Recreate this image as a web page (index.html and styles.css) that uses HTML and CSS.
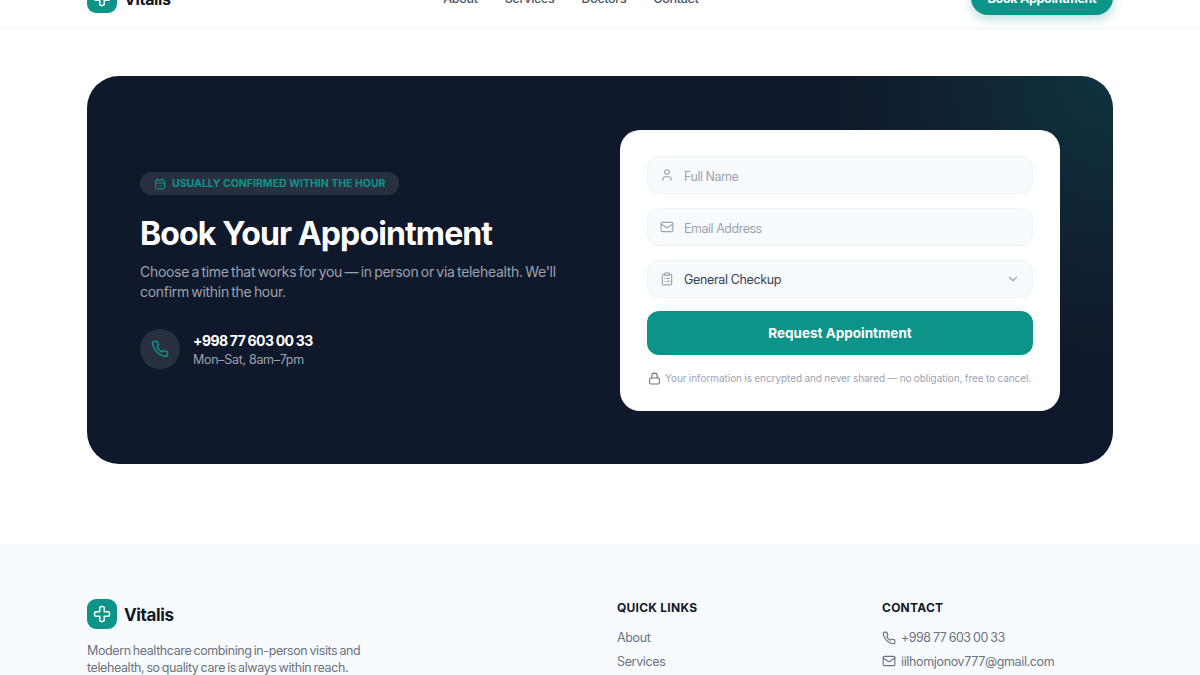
FILE: index.html
```html
<!DOCTYPE html>
<html lang="en">
<head>
<meta charset="utf-8">
<title>Vitalis</title>
<link rel="stylesheet" href="styles.css">
</head>
<body>
<svg class="defs" width="0" height="0">
  <symbol id="cross" viewBox="0 0 24 24"><path d="M11 2a2 2 0 0 0-2 2v5H4a2 2 0 0 0-2 2v2c0 1.1.9 2 2 2h5v5c0 1.1.9 2 2 2h2a2 2 0 0 0 2-2v-5h5a2 2 0 0 0 2-2v-2a2 2 0 0 0-2-2h-5V4a2 2 0 0 0-2-2h-2z"/></symbol>
  <symbol id="phone" viewBox="0 0 24 24"><path d="M22 16.92v3a2 2 0 0 1-2.18 2 19.79 19.79 0 0 1-8.63-3.07 19.5 19.5 0 0 1-6-6 19.79 19.79 0 0 1-3.07-8.67A2 2 0 0 1 4.11 2h3a2 2 0 0 1 2 1.72 12.84 12.84 0 0 0 .7 2.81 2 2 0 0 1-.45 2.11L8.09 9.91a16 16 0 0 0 6 6l1.27-1.27a2 2 0 0 1 2.11-.45 12.84 12.84 0 0 0 2.81.7A2 2 0 0 1 22 16.92z"/></symbol>
  <symbol id="mail" viewBox="0 0 24 24"><rect x="2" y="4" width="20" height="16" rx="2"/><path d="m22 7-8.97 5.7a1.94 1.94 0 0 1-2.06 0L2 7"/></symbol>
  <symbol id="user" viewBox="0 0 24 24"><path d="M19 21v-2a4 4 0 0 0-4-4H9a4 4 0 0 0-4 4v2"/><circle cx="12" cy="7" r="4"/></symbol>
  <symbol id="clip" viewBox="0 0 24 24"><rect x="8" y="2" width="8" height="4" rx="1"/><path d="M16 4h2a2 2 0 0 1 2 2v14a2 2 0 0 1-2 2H6a2 2 0 0 1-2-2V6a2 2 0 0 1 2-2h2"/><path d="M12 11h4M12 16h4M8 11h.01M8 16h.01"/></symbol>
  <symbol id="chev" viewBox="0 0 24 24"><path d="m6 9 6 6 6-6"/></symbol>
  <symbol id="lock" viewBox="0 0 24 24"><rect x="3" y="11" width="18" height="11" rx="2"/><path d="M7 11V7a5 5 0 0 1 10 0v4"/></symbol>
  <symbol id="cal" viewBox="0 0 24 24"><path d="M8 2v4M16 2v4"/><rect x="3" y="4" width="18" height="18" rx="2"/><path d="M3 10h18"/><path d="m9 16 2 2 4-4"/></symbol>
</svg>

<header class="nav">
  <div class="nav-inner">
    <a class="brand brand-top"><span class="brand-mark"><svg class="ic ic-18 white"><use href="#cross"/></svg></span><span class="brand-name">Vitalis</span></a>
    <nav class="nav-links"><a>About</a><a>Services</a><a>Doctors</a><a>Contact</a></nav>
    <a class="nav-cta">Book Appointment</a>
  </div>
</header>

<main class="section">
  <div class="hero">
    <div class="hero-copy">
      <div class="badge"><svg class="ic ic-12"><use href="#cal"/></svg>USUALLY CONFIRMED WITHIN THE HOUR</div>
      <h1>Book Your Appointment</h1>
      <p class="lead">Choose a time that works for you — in person or via telehealth. We'll confirm within the hour.</p>
      <div class="call">
        <span class="call-icon"><svg class="ic ic-18"><use href="#phone"/></svg></span>
        <div class="call-text"><strong>+998 77 603 00 33</strong><span>Mon–Sat, 8am–7pm</span></div>
      </div>
    </div>
    <form class="form">
      <label class="field"><svg class="ic ic-14"><use href="#user"/></svg><input type="text" placeholder="Full Name"></label>
      <label class="field"><svg class="ic ic-14"><use href="#mail"/></svg><input type="email" placeholder="Email Address"></label>
      <label class="field"><svg class="ic ic-14"><use href="#clip"/></svg><select><option>General Checkup</option></select><svg class="ic ic-14"><use href="#chev"/></svg></label>
      <button class="submit" type="button">Request Appointment</button>
      <p class="note"><svg class="ic ic-13"><use href="#lock"/></svg>Your information is encrypted and never shared — no obligation, free to cancel.</p>
    </form>
  </div>
</main>

<footer class="footer">
  <div class="footer-grid">
    <div class="footer-about">
      <a class="brand"><span class="brand-mark"><svg class="ic ic-18 white"><use href="#cross"/></svg></span><span class="brand-name">Vitalis</span></a>
      <p>Modern healthcare combining in-person visits and telehealth, so quality care is always within reach.</p>
    </div>
    <div class="footer-col">
      <h4>QUICK LINKS</h4>
      <a>About</a><a>Services</a><a>Doctors</a>
    </div>
    <div class="footer-col">
      <h4>CONTACT</h4>
      <a class="with-ic tel"><svg class="ic ic-14"><use href="#phone"/></svg>+998 77 603 00 33</a>
      <a class="with-ic"><svg class="ic ic-14"><use href="#mail"/></svg>iilhomjonov777@gmail.com</a>
    </div>
  </div>
</footer>
</body>
</html>
```
FILE: styles.css
```css
* { box-sizing: border-box; }
html { overflow: hidden; }
body { margin: 0; background: #fff; font-family: "Inter", "Liberation Sans", sans-serif; color: #111827; }
.defs { position: absolute; }
.ic { fill: none; stroke: currentColor; stroke-width: 2; stroke-linecap: round; stroke-linejoin: round; flex: none; }
.ic-12 { width: 12px; height: 12px; }
.ic-13 { width: 13px; height: 13px; }
.ic-14 { width: 14px; height: 14px; }
.ic-18 { width: 18px; height: 18px; }
.white { color: #fff; }

.nav { height: 61px; margin-top: -32px; border-bottom: 1px solid #f3f5f7; }
.nav-inner { width: 1026px; margin: 0 auto; height: 60px; display: flex; justify-content: space-between; align-items: center; }
.brand { display: flex; align-items: center; gap: 7px; }
.brand-mark { width: 30px; height: 30px; border-radius: 9px; background: #0d9488; display: flex; align-items: center; justify-content: center; }
.brand-name { padding-top: 1px; font-size: 17px; font-weight: 700; letter-spacing: -.35px; color: #111827; }
.brand-top .brand-name { font-size: 16px; }
.nav-links { display: flex; gap: 27px; font-size: 12.5px; font-weight: 500; letter-spacing: -.3px; color: #4b5563; }
.nav-cta { width: 142px; height: 34px; border-radius: 17px; background: #0d9488; color: #fff; font-size: 12.5px; font-weight: 700; letter-spacing: -.3px; display: flex; align-items: center; justify-content: center; box-shadow: 0 4px 12px rgba(13,148,136,.3); }

.section { padding: 47px 0 80px; }
.hero { width: 1026px; height: 388px; margin: 0 auto; border-radius: 32px; padding: 54px 53px 53px; display: flex; justify-content: space-between; align-items: center;
  background: radial-gradient(circle at 100% 0, rgba(13,148,136,.2), rgba(13,148,136,0) 280px), #10192b; }
.hero-copy { width: 425px; }
.badge { display: inline-flex; align-items: center; gap: 6px; height: 23px; padding: 0 14px; border-radius: 12px; background: rgba(255,255,255,.1); color: #0d9488; font-size: 10.5px; font-weight: 700; }
h1 { margin: 20px 0 0; font-size: 32px; line-height: 38px; font-weight: 700; letter-spacing: -.88px; color: #fff; }
.lead { margin: 9px 0 0; font-size: 14px; line-height: 20px; letter-spacing: -.3px; word-spacing: -1.2px; color: #9ca3af; }
.call { margin-top: 27px; display: flex; align-items: center; gap: 13px; }
.call-icon { width: 40px; height: 40px; border-radius: 50%; background: rgba(255,255,255,.1); color: #0d9488; display: flex; align-items: center; justify-content: center; }
.call-text { display: flex; flex-direction: column; padding-top: 2px; }
.call-text strong { font-size: 14px; line-height: 20px; font-weight: 700; letter-spacing: -.6px; word-spacing: -.3px; color: #fff; }
.call-text span { font-size: 12.5px; line-height: 18px; letter-spacing: -.3px; color: #9ca3af; }

.form { width: 440px; height: 281px; padding: 26px 27px; border-radius: 20px; background: #fff; display: flex; flex-direction: column; }
.field { height: 38px; margin-bottom: 14px; padding: 0 12px; border: 1px solid #f0f3f6; border-radius: 12px; background: #f8fbfd; display: flex; align-items: center; gap: 10px; color: #9ca3af; }
.field input, .field select { flex: 1; min-width: 0; border: 0; outline: 0; padding: 0; background: transparent; font: 400 12.5px "Inter", sans-serif; letter-spacing: -.35px; color: #374151; appearance: none; }
.field input { padding-top: 2px; letter-spacing: -.48px; }
.field input::placeholder { color: #9ca3af; opacity: 1; }
.submit { height: 44px; margin-top: -1px; border: 0; border-radius: 12px; background: #0d9488; color: #fff; font: 700 13.5px "Inter", sans-serif; }
.note { margin: 16px 0 0; display: flex; align-items: center; gap: 4px; font-size: 10px; line-height: 14px; letter-spacing: -.05px; word-spacing: -.4px; color: #9ca3af; white-space: nowrap; padding-left: 1px; }
.note .ic { color: #6b7280; }

.footer { background: #f8fbfd; padding: 55px 0 40px; }
.footer-grid { width: 1026px; margin: 0 auto; display: grid; grid-template-columns: 530px 265px 1fr; }
.footer-about p { width: 300px; margin: 14px 0 0; font-size: 12.5px; line-height: 16.5px; letter-spacing: -.4px; word-spacing: -1px; color: #6b7280; }
.footer-col { display: flex; flex-direction: column; padding-top: 1px; }
.footer-col h4 { margin: 0 0 10px; font-size: 12px; line-height: 16px; font-weight: 700; letter-spacing: .25px; color: #111827; }
.footer-col a { font-size: 12.5px; line-height: 23.5px; letter-spacing: -.35px; color: #6b7280; }
.with-ic { display: flex; align-items: center; gap: 5px; }
.footer-col .tel { letter-spacing: -.5px; word-spacing: -.6px; }
```
